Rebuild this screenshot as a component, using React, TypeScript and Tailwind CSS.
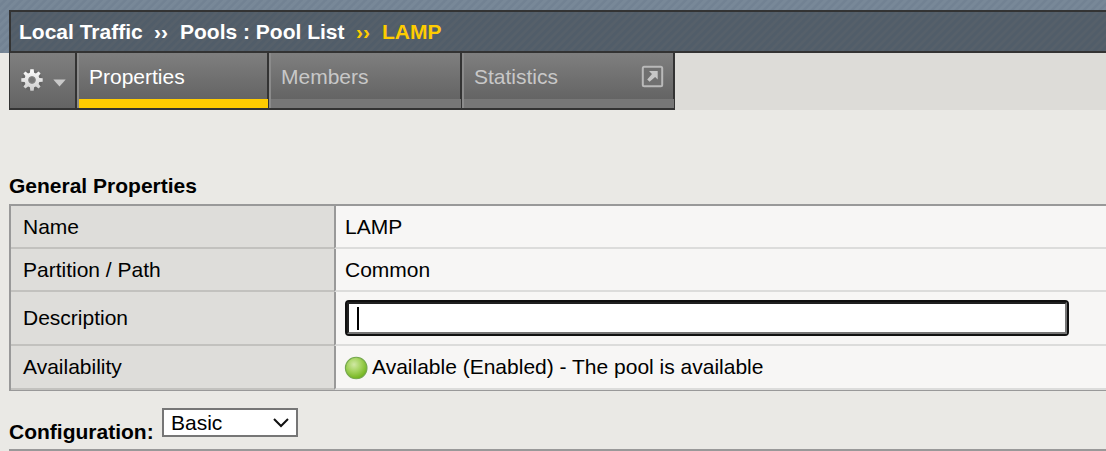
import React from "react";

const stripes =
  "bg-[repeating-linear-gradient(135deg,#788898_0px,#788898_2px,#728293_3px,#728293_4.66px,#788898_5.66px)]";
const darkStripes =
  "bg-[repeating-linear-gradient(135deg,#515d69_0px,#515d69_2px,#56606a_3px,#56606a_4.66px,#515d69_5.66px)]";

function Gear() {
  return (
    <svg width="24" height="24" viewBox="0 0 24 24" className="-mt-px shrink-0">
      <defs>
        <linearGradient id="gear" x1="0" y1="0" x2="0" y2="24" gradientUnits="userSpaceOnUse">
          <stop offset="0" stopColor="#ffffff" />
          <stop offset="1" stopColor="#cacaca" />
        </linearGradient>
      </defs>
      <circle cx="12" cy="12.5" r="10.5" fill="#555" opacity="0.35" />
      <path
        fill="url(#gear)"
        d="M10.3 1.3H13.7L14.1 4.7L15.9 5.4L18.6 3.4L20.6 5.4L18.6 8.1L19.3 9.9L22.7 10.3V13.7L19.3 14.1L18.6 15.9L20.6 18.6L18.6 20.6L15.9 18.6L14.1 19.3L13.7 22.7H10.3L9.9 19.3L8.1 18.6L5.4 20.6L3.4 18.6L5.4 15.9L4.7 14.1L1.3 13.7V10.3L4.7 9.9L5.4 8.1L3.4 5.4L5.4 3.4L8.1 5.4L9.9 4.7Z"
      />
      <circle cx="12" cy="12" r="3.4" fill="#777" stroke="#8a8a8a" strokeWidth="1" />
    </svg>
  );
}

function Popout() {
  return (
    <svg width="23" height="23" viewBox="0 0 23 23" className="shrink-0">
      <rect x="1.8" y="1.8" width="19.4" height="19.4" rx="1.5" fill="#707070" stroke="#b9b9b9" strokeWidth="2" />
      <path d="M8 6H16.7V14.6L14.1 12L8.6 16.8L6.2 14.4L11 8.9Z" fill="#c6c6c6" />
    </svg>
  );
}

function Tab({ label, active, width, children }: { label: string; active?: boolean; width: string; children?: React.ReactNode }) {
  return (
    <div className={`flex h-[57px] flex-col border-r-2 border-b-2 border-[#333] ${width}`}>
      <div className="flex h-[55px] border-l-2 border-[#8b8b8b]">
        <div className="flex flex-1 flex-col">
          <div
            className={`flex h-[46px] items-center justify-between bg-linear-to-b from-[#7f7f7f] to-[#646464] pr-[9px] pl-[10px] ${
              active ? "text-white" : "text-[#c8c8c8]"
            }`}
          >
            <span className="pt-px">{label}</span>
            {children}
          </div>
          <div className={`-mr-px h-[9px] ${active ? "bg-[#fc0]" : "bg-[#777]"}`} />
        </div>
      </div>
    </div>
  );
}

function Row({ label, height, children }: { label: string; height: string; children: React.ReactNode }) {
  return (
    <div className={`flex ${height}`}>
      <div className="flex w-[323px] shrink-0 items-center border-b-2 border-[#c2c1be] bg-[#dedddA] pl-3">{label}</div>
      <div className="flex flex-1 items-center border-b-2 border-l-2 border-b-[#dcdcdb] border-l-[#999] bg-[#f7f6f5] pl-[9px]">
        {children}
      </div>
    </div>
  );
}

export default function App() {
  return (
    <div className="h-[451px] w-full overflow-hidden bg-[#eae9e5] font-['Liberation_Sans',Arial,sans-serif] text-[21px] leading-6 text-black">
      <header className={`h-[53px] pt-[10px] pl-[9px] ${stripes}`}>
        <div className={`flex h-[43px] items-center border-2 border-r-0 border-[#333] pl-2 font-bold whitespace-pre text-white ${darkStripes}`}>
          <span className="w-[135px]">Local Traffic</span>
          <span className="w-[26px]">››</span>
          <span className="w-[176px]">Pools : Pool List</span>
          <span className="w-[26px] text-[#fc0]">››</span>
          <span className="text-[#fc0]">LAMP</span>
        </div>
      </header>
      <nav className="ml-[9px] flex h-[57px] bg-[#dddcd8]">
        <div className="flex w-[68px] items-center border-r-2 border-b-2 border-l border-[#333] bg-linear-to-b from-[#7f7f7f] to-[#646464] pl-[10px]">
          <Gear />
          <svg width="13" height="8" viewBox="0 0 13 8" className="mt-[4px] ml-[9px]">
            <path d="M0.3 0.5H12.7L6.5 7.4Z" fill="#c9c9c9" />
          </svg>
        </div>
        <Tab label="Properties" active width="w-[192px]" />
        <Tab label="Members" width="w-[193px]" />
        <Tab label="Statistics" width="w-[213px]">
          <Popout />
        </Tab>
      </nav>
      <main className="pl-[9px]">
        <h2 className="mt-[64px] font-bold">General Properties</h2>
        <section className="mt-[6px] border-t-2 border-b border-l-2 border-[#999]">
          <Row label="Name" height="h-[43px]">LAMP</Row>
          <Row label="Partition / Path" height="h-[43px]">Common</Row>
          <Row label="Description" height="h-[54px]">
            <div className="flex h-9 w-[724px] items-center rounded-[4px] border-2 border-[#101010] bg-[#101010]">
              <div className="flex h-8 w-full items-center border-2 border-t-[#202020] border-r-[#767676] border-b-[#767676] border-l-[#202020] bg-white pl-2">
                <span className="h-[23px] w-[2px] bg-black" />
              </div>
            </div>
          </Row>
          <Row label="Availability" height="h-[44px]">
            <svg width="24" height="24" viewBox="0 0 24 24" className="mr-[4px] -ml-px mt-[2px] shrink-0">
              <defs>
                <radialGradient id="ball" cx="0.4" cy="0.34" r="0.65">
                  <stop offset="0" stopColor="#d0e8a4" />
                  <stop offset="0.5" stopColor="#a4d35e" />
                  <stop offset="1" stopColor="#74b51f" />
                </radialGradient>
              </defs>
              <circle cx="12.2" cy="12" r="10.8" fill="url(#ball)" stroke="#76a850" strokeWidth="1.1" />
            </svg>
            Available (Enabled) - The pool is available
          </Row>
        </section>
        <div className="flex h-[60px] border-b-2 border-[#999] pt-[17px]">
          <span className="mt-[12px] w-[153px] font-bold">Configuration:</span>
          <div className="flex h-[29px] w-[136px] items-center justify-between border-2 border-[#767676] bg-white pr-[6px] pl-[7px]">
            <span>Basic</span>
            <svg width="18" height="12" viewBox="0 0 18 12" fill="none" stroke="#111" strokeWidth="2">
              <path d="M2 2L9 9L16 2" />
            </svg>
          </div>
        </div>
      </main>
    </div>
  );
}
